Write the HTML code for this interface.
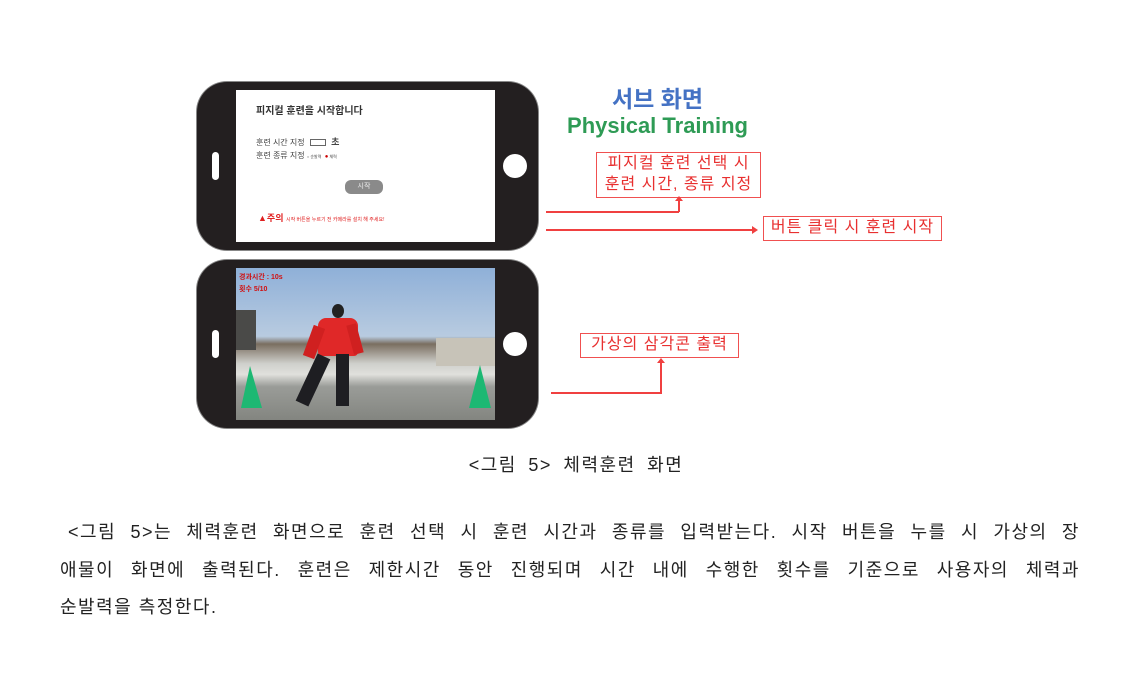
<!DOCTYPE html>
<html><head><meta charset="utf-8"><style>
body{margin:0;width:1130px;height:675px;background:#fff;position:relative;overflow:hidden;font-family:"Liberation Sans","Noto Sans CJK KR","NanumGothic",sans-serif;}
.a{position:absolute}
.phone{position:absolute;left:197px;width:341px;height:168px;background:#231f20;border-radius:30px;box-shadow:0 0 0 1px #888;}
.scr{position:absolute;left:39px;top:8px;width:259px;height:152px;}
.slot{position:absolute;left:15px;top:70px;width:7px;height:28px;background:#fff;border-radius:4px}
.btn{position:absolute;left:306px;top:72px;width:24px;height:24px;background:#fff;border-radius:50%}
.rb{position:absolute;border:1.5px solid #f05050;color:#e83030;font-size:16px;background:#fff;letter-spacing:1px;text-align:center;line-height:22px}
.ln{position:absolute;background:#f04040;height:1.5px}
.p{position:absolute;left:60px;width:1020px;font-size:18px;letter-spacing:1.5px;color:#222;text-align:justify;text-align-last:justify;white-space:nowrap;}
</style></head><body>
<div class="phone" style="top:82px"><div class="slot"></div><div class="btn"></div>
<div class="scr" style="background:#fff">
<div class="a" style="left:20px;top:12px;font-size:10px;color:#333;font-weight:bold">피지컬 훈련을 시작합니다</div>
<div class="a" style="left:20px;top:45px;font-size:8px;color:#444">훈련 시간 지정 <span style="display:inline-block;width:14px;height:5px;border:1px solid #666;vertical-align:middle;margin:0 3px"></span> <b style="font-size:9px">초</b></div>
<div class="a" style="left:20px;top:60px;font-size:8px;color:#444">훈련 종류 지정 <span style="font-size:4px">○ 순발력 &nbsp; <span style="color:#c00;font-size:6px">●</span> 체력</span></div>
<div class="a" style="left:109px;top:90px;width:38px;height:14px;background:#8a8a8a;border-radius:6px;color:#eee;font-size:7px;text-align:center;line-height:14px">시작</div>
<div class="a" style="left:22px;top:121px;font-size:9px;color:#e02020;font-weight:bold">▲주의 <span style="font-size:5px;font-weight:normal">시작 버튼을 누르기 전 카메라를 설치 해 주세요!</span></div>
</div></div>
<div class="phone" style="top:260px"><div class="slot"></div><div class="btn"></div>
<div class="scr" style="background:linear-gradient(#8fb0d8 0%,#b8cbe0 45%,#7a6e60 50%,#cfd0cc 63%,#e0e0dc 70%,#9a9c98 78%,#838580 100%);overflow:hidden">
<div class="a" style="left:200px;top:70px;width:59px;height:28px;background:#c7c3b8"></div>
<div class="a" style="left:0;top:42px;width:20px;height:40px;background:#4a4a48"></div>
<div class="a" style="left:3px;top:4px;font-size:7px;color:#d01010;font-weight:bold;line-height:12px">경과시간 : 10s<br>횟수 5/10</div>
<div class="a" style="left:96px;top:36px;width:12px;height:14px;background:#222;border-radius:50%"></div>
<div class="a" style="left:82px;top:50px;width:40px;height:38px;background:#e02828;border-radius:8px 8px 4px 4px"></div>
<div class="a" style="left:72px;top:58px;width:12px;height:32px;background:#d02020;transform:rotate(20deg)"></div>
<div class="a" style="left:114px;top:56px;width:10px;height:30px;background:#d02020;transform:rotate(-15deg)"></div>
<div class="a" style="left:70px;top:86px;width:14px;height:52px;background:#1e1e22;transform:rotate(25deg)"></div>
<div class="a" style="left:100px;top:86px;width:13px;height:52px;background:#1e1e22"></div>
<svg class="a" style="left:0;top:0" width="259" height="152"><polygon points="14,98 5,140 26,140" fill="#1db873"/><polygon points="244,97 233,140 255,140" fill="#1db873"/></svg>
</div></div>
<div class="a" style="left:560px;top:80px;width:195px;text-align:center;font-size:23px;font-weight:bold;color:#4472c4">서브 화면</div>
<div class="a" style="left:560px;top:113px;width:195px;text-align:center;font-size:22px;font-weight:bold;color:#2e9b55">Physical Training</div>
<div class="rb" style="left:596px;top:152px;width:163px;height:44px;line-height:21px">피지컬 훈련 선택 시<br>훈련 시간, 종류 지정</div>
<div class="rb" style="left:763px;top:216px;width:177px;height:23px">버튼 클릭 시 훈련 시작</div>
<div class="rb" style="left:580px;top:333px;width:157px;height:23px">가상의 삼각콘 출력</div>
<div class="ln" style="left:546px;top:211px;width:133px"></div>
<div class="ln" style="left:678px;top:200px;width:1.5px;height:12px"></div>
<div class="a" style="left:675px;top:196px;width:0;height:0;border:4px solid transparent;border-bottom:5px solid #f04040;border-top:0"></div>
<div class="ln" style="left:546px;top:229px;width:207px"></div>
<div class="a" style="left:752px;top:226px;border:4px solid transparent;border-left:6px solid #f04040;border-right:0"></div>
<div class="ln" style="left:551px;top:392px;width:111px"></div>
<div class="ln" style="left:660px;top:361px;width:1.5px;height:32px"></div>
<div class="a" style="left:657px;top:358px;border:4px solid transparent;border-bottom:5px solid #f04040;border-top:0"></div>
<div class="a" style="left:0;width:1152px;top:451px;text-align:center;font-size:18px;letter-spacing:1.5px;color:#222;word-spacing:5px">&lt;그림 5&gt; 체력훈련 화면</div>
<div class="p" style="top:518px;left:68px;width:1012px">&lt;그림 5&gt;는 체력훈련 화면으로 훈련 선택 시 훈련 시간과 종류를 입력받는다. 시작 버튼을 누를 시 가상의 장</div>
<div class="p" style="top:556px">애물이 화면에 출력된다. 훈련은 제한시간 동안 진행되며 시간 내에 수행한 횟수를 기준으로 사용자의 체력과</div>
<div class="p" style="top:593px;text-align-last:left">순발력을 측정한다.</div>
</body></html>
